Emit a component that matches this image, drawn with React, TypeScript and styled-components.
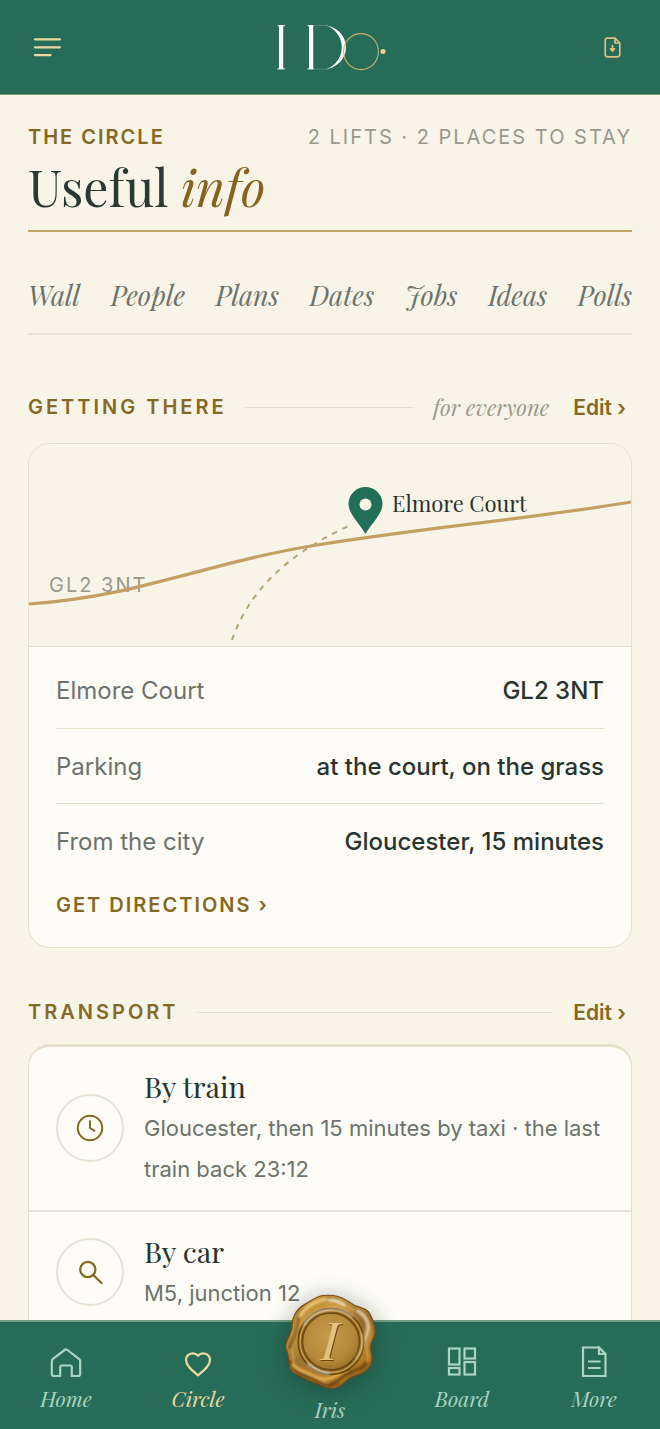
import React, { useState } from "react";
import styled, { createGlobalStyle } from "styled-components";

const sans = `Inter, "Liberation Sans", sans-serif`;
const serif = `"Playfair Display", "Liberation Serif", serif`;

const GlobalStyle = createGlobalStyle`
  * {
    box-sizing: border-box;
  }
  body {
    margin: 0;
    background: #f8f4e7;
    color: #2a342f;
    font-family: ${sans};
  }
  button {
    padding: 0;
    border: 0;
    background: none;
    color: inherit;
    font: inherit;
    cursor: pointer;
  }
  a {
    color: inherit;
    text-decoration: none;
  }
  h1, h2, h3, p, ul, dl, dd {
    margin: 0;
    padding: 0;
  }
  svg {
    display: block;
  }
`;

const Shell = styled.div`
  display: flex;
  flex-direction: column;
  height: 100vh;
`;

const TopBar = styled.header`
  display: flex;
  align-items: center;
  justify-content: space-between;
  height: 95px;
  padding: 0 32px;
  flex: none;
  background: #276c58;
  border-bottom: 1px solid #6f9a74;
  color: #ecd9a2;
`;

const IconButton = styled.button`
  display: flex;
  align-items: center;
  justify-content: center;
  width: 32px;
  height: 32px;
`;

const Main = styled.main`
  flex: 1;
  min-height: 0;
  overflow-y: auto;
  scrollbar-width: none;
  padding: 28px 28px 60px;
`;

const TitleBlock = styled.div`
  border-bottom: 2px solid #c6a468;
  padding-bottom: 7px;
`;

const TitleMeta = styled.div`
  display: flex;
  justify-content: space-between;
  font-size: 20px;
  line-height: 28px;
  letter-spacing: 2px;
  text-transform: uppercase;
  color: #97998d;
`;

const Eyebrow = styled.span`
  color: #846a24;
  font-weight: 600;
`;

const PageTitle = styled.h1`
  font-family: ${serif};
  font-size: 50px;
  font-weight: 400;
  line-height: 72px;
  color: #2a3a32;

  em {
    color: #86641c;
  }
`;

const Tabs = styled.nav`
  display: flex;
  justify-content: space-between;
  padding: 45px 0 20px;
  border-bottom: 2px solid #e8e3d5;
  font-family: ${serif};
  font-size: 27px;
  line-height: 36px;
  font-style: italic;
  color: #6b736c;
`;

const Section = styled.section<{ $tight?: boolean }>`
  margin-top: ${(p) => (p.$tight ? "48px" : "56px")};
`;

const SectionHead = styled.div<{ $tight?: boolean }>`
  display: flex;
  align-items: center;
  height: 32px;
  margin-bottom: ${(p) => (p.$tight ? "16px" : "20px")};
  padding-right: 6px;
`;

const SectionTitle = styled.h2`
  font-size: 20px;
  font-weight: 600;
  letter-spacing: 3px;
  text-transform: uppercase;
  color: #846a24;
`;

const Rule = styled.span`
  flex: 1;
  height: 1px;
  margin: 0 20px 0 18px;
  background: #e6dfc9;
`;

const Audience = styled.span`
  margin-right: 24px;
  font-family: ${serif};
  font-size: 22px;
  font-style: italic;
  color: #97998d;
`;

const EditButton = styled.button`
  font-size: 21px;
  font-weight: 600;
  color: #846a24;
`;

const Card = styled.div`
  overflow: hidden;
  border: 1px solid #e6dfc9;
  border-radius: 22px;
  background: #fdfcf7;
`;

const RouteList = styled(Card)`
  border-top-width: 3px;

  && {
    padding-bottom: 24px;
  }
`;

const MapBox = styled.div`
  background: #f8f4e7;
  border-bottom: 1px solid #e6dfc9;

  svg {
    width: 100%;
    height: auto;
  }
`;

const Facts = styled.dl`
  padding: 6px 27px 0;
`;

const Fact = styled.div`
  display: flex;
  align-items: center;
  justify-content: space-between;
  height: 75px;
  font-size: 24px;

  & + & {
    border-top: 1px solid #e6dfc9;
  }

  dt {
    color: #6b736c;
  }

  dd {
    font-weight: 500;
  }
`;

const Directions = styled.a`
  display: block;
  padding: 11px 27px 26px;
  font-size: 20px;
  line-height: 32px;
  font-weight: 600;
  letter-spacing: 2px;
  text-transform: uppercase;
  color: #846a24;
`;

const Route = styled.li`
  display: flex;
  align-items: center;
  gap: 20px;
  padding: 18px 27px 20px;
  list-style: none;

  & + & {
    border-top: 2px solid #e9e4d6;
  }
`;

const RouteIcon = styled.span`
  display: flex;
  align-items: center;
  justify-content: center;
  flex: none;
  width: 68px;
  height: 68px;
  border: 2px solid #e8e3d3;
  border-radius: 50%;
  color: #7f6a1f;
`;

const RouteName = styled.h3`
  font-family: ${serif};
  font-size: 29px;
  line-height: 43px;
  font-weight: 400;
`;

const RouteText = styled.p`
  font-size: 22px;
  line-height: 41px;
  color: #6b736c;
`;

const BottomNav = styled.nav`
  display: grid;
  grid-template-columns: repeat(5, 1fr);
  flex: none;
  height: 109px;
  background: #276c58;
  border-top: 2px solid #6f9f86;
`;

const NavItem = styled.a<{ $active?: boolean }>`
  display: flex;
  flex-direction: column;
  align-items: center;
  gap: 6px;
  padding-top: 24px;
  font-family: ${serif};
  font-size: 21px;
  line-height: 28px;
  font-style: italic;
  color: ${(p) => (p.$active ? "#ecd9a2" : "#a9d5c1")};
`;

const SealItem = styled.a`
  position: relative;
  display: flex;
  flex-direction: column;
  align-items: center;
  padding-top: 73px;
  font-family: ${serif};
  font-size: 21px;
  line-height: 28px;
  font-style: italic;
  color: #a9d5c1;
`;

const SealBadge = styled.span`
  position: absolute;
  top: -28px;
  left: 50%;
  transform: translateX(-50%);
  filter: drop-shadow(0 4px 12px rgba(20, 35, 28, 0.4));
`;

const Logo = () => (
  <svg width="112" height="48" viewBox="274 23 112 48" role="img" aria-label="I Do">
    <defs>
      <mask id="bowl">
        <rect x="326" y="20" width="30" height="55" fill="#fff" />
        <ellipse cx="318.5" cy="47.3" rx="23.3" ry="23.2" fill="#000" />
      </mask>
    </defs>
    <g fill="#fff">
      <rect x="279" y="25.5" width="4.2" height="43.5" />
      <rect x="277.5" y="25.2" width="7.5" height="1" />
      <rect x="277.5" y="68.4" width="7.5" height="1" />
      <rect x="309" y="25.5" width="4.2" height="43.5" />
      <rect x="307.5" y="25.2" width="6" height="1" />
      <rect x="307.5" y="68.4" width="6" height="1" />
      <rect x="313" y="25.3" width="15" height="0.6" opacity="0.35" />
      <rect x="313" y="68.8" width="15" height="0.6" opacity="0.35" />
      <ellipse cx="323" cy="47.3" rx="23" ry="22" mask="url(#bowl)" />
    </g>
    <ellipse cx="361" cy="51.6" rx="17.4" ry="18" fill="none" stroke="#c9b272" strokeWidth="1.1" />
    <circle cx="383" cy="51.6" r="2.5" fill="#ecd29a" />
  </svg>
);

const MenuIcon = () => (
  <svg width="32" height="32" viewBox="0 0 32 32" fill="none" stroke="currentColor" strokeWidth="2.2" strokeLinecap="round">
    <path d="M3 8.3h25M3 16.3h25M3 24.2h15.500" />
  </svg>
);

const SaveIcon = () => (
  <svg width="32" height="32" viewBox="0 0 32 32" fill="none" stroke="#d8c283" strokeWidth="1.700" strokeLinejoin="round" strokeLinecap="round">
    <path d="M19 7.200h-7.500A2.300 2.300 0 0 0 9.200 9.500v14a2.300 2.300 0 0 0 2.300 2.300h10a2.300 2.300 0 0 0 2.300-2.300V12L19 7.200V12h4.800" />
    <path d="M16.500 14.500v3" />
    <path d="M14.500 17.800h4l-2 2.500z" fill="#d8c283" />
  </svg>
);

const VenueMap = () => (
  <svg viewBox="0 0 602 202" fill="none">
    <text x="20" y="148" fontFamily={sans} fontSize="20" letterSpacing="2" fill="#97998d">
      GL2 3NT
    </text>
    <path d="M0 160C112 152 176 119 288 101S500 75 602 58" stroke="#c4a064" strokeWidth="3.200" />
    <path d="M203 196C217 155 250 113 322 81" stroke="#b9a47a" strokeWidth="2" strokeDasharray="5.500 6" />
    <path d="M336.500 90C331 80 319.500 70 319.500 60a17 17 0 0 1 34 0c0 10-11.500 20-17 30z" fill="#216f56" />
    <circle cx="336.500" cy="60.500" r="6" fill="#f8f4e7" />
    <text x="363" y="68" fontFamily={serif} fontSize="22" fill="#2a342f">
      Elmore Court
    </text>
  </svg>
);

const ClockIcon = () => (
  <svg width="32" height="32" viewBox="0 0 32 32" fill="none" stroke="currentColor" strokeWidth="2" strokeLinecap="round" strokeLinejoin="round">
    <circle cx="16" cy="16" r="12.200" />
    <path d="M16 9.200V16l4.500 2.800" />
  </svg>
);

const SearchIcon = () => (
  <svg width="32" height="32" viewBox="0 0 32 32" fill="none" stroke="currentColor" strokeWidth="2.200" strokeLinecap="round">
    <circle cx="13.800" cy="13.500" r="7.600" />
    <path d="M19.500 19.200l8 7.800" />
  </svg>
);

const HomeIcon = () => (
  <svg width="32" height="32" viewBox="0 0 32 32" fill="none" stroke="currentColor" strokeWidth="2.200" strokeLinejoin="round">
    <path d="M1.800 15.200a3 3 0 0 1 1.200-2.400L14.600 4a2.300 2.300 0 0 1 2.800 0L29 12.800a3 3 0 0 1 1.200 2.400V28a2 2 0 0 1-2 2h-6.400V21a1.500 1.500 0 0 0-1.500-1.500h-8.600a1.500 1.500 0 0 0-1.500 1.500v9H3.800a2 2 0 0 1-2-2z" />
  </svg>
);

const HeartIcon = () => (
  <svg width="32" height="32" viewBox="0 0 32 32" fill="none" stroke="currentColor" strokeWidth="2.200" strokeLinejoin="round">
    <path d="M16 29.300C11.500 25.500 4 20.500 4 13.800a6.800 6.800 0 0 1 12-4 6.800 6.800 0 0 1 12 4C28 20.500 20.500 25.500 16 29.300z" />
  </svg>
);

const BoardIcon = () => (
  <svg width="32" height="32" viewBox="0 0 32 32" fill="none" stroke="currentColor" strokeWidth="2.200">
    <rect x="3" y="2.500" width="10.500" height="16" />
    <rect x="3" y="22" width="10.500" height="6.500" />
    <rect x="18.500" y="2.500" width="10.500" height="10" />
    <rect x="18.500" y="16" width="10.500" height="12.500" />
  </svg>
);

const PageIcon = () => (
  <svg width="32" height="32" viewBox="0 0 32 32" fill="none" stroke="currentColor" strokeWidth="2.200">
    <path d="M21 1.500H5V30h22.500V8L21 1.500V8h6.500" />
    <path d="M10 15.500h12.500M10 22h12.500" />
  </svg>
);

const waxEdge =
  "M24 9C29 6 34 2 40 1.500S50 1 55 2.500C62 4 66 9 72 11.500S84 14 87 20s5 12 5 18-4 9-4.500 15S90 59 89 66s-4 9-9 12.500S73 80 67 84s-9 9-15 10-10-.5-15-3-11-4-17-7.500S9 80 7 74s-1-8-2-13-3-6-2-11S7 42 8.500 36 8 27 12 20 19 12 24 9z";

const Seal = () => (
  <svg width="94" height="98" viewBox="0 0 94 98">
    <defs>
      <linearGradient id="wax" x1="0.200" y1="0" x2="0.800" y2="1">
        <stop offset="0" stopColor="#b0802a" />
        <stop offset="0.250" stopColor="#cf9f45" />
        <stop offset="0.500" stopColor="#9c7230" />
        <stop offset="0.750" stopColor="#b88029" />
        <stop offset="1" stopColor="#945c14" />
      </linearGradient>
      <radialGradient id="face" cx="0.450" cy="0.400" r="0.650">
        <stop offset="0" stopColor="#c49b4a" />
        <stop offset="0.700" stopColor="#b48839" />
        <stop offset="1" stopColor="#946a25" />
      </radialGradient>
      <filter id="soft">
        <feGaussianBlur stdDeviation="0.800" />
      </filter>
    </defs>
    <path d={waxEdge} fill="url(#wax)" stroke="#7c4d12" strokeWidth="1.200" />
    <g fill="none" strokeLinecap="round" filter="url(#soft)">
      <path d={waxEdge} transform="translate(3 3) scale(0.940)" stroke="#6d4310" strokeWidth="1.400" opacity="0.550" />
      <path d={waxEdge} transform="translate(5 5) scale(0.900)" stroke="#e6c06c" strokeWidth="2" opacity="0.550" />
      <path d="M7 68c3 8 8 11 14 13s11 5 17 8 11 3 17-2 9-8 16-10 10-4 12-8" stroke="#5f350a" strokeWidth="3" opacity="0.800" />
      <path d="M10 71c4 4 8 5 14 8s12 6 19 6 12-5 20-9" stroke="#ecb552" strokeWidth="2.500" />
      <path d="M7 54c1-7 6-12 7-19s1-12 6-17" stroke="#5f3d10" strokeWidth="2.500" opacity="0.700" />
      <path d="M17 22C23 12 32 7 42 5" stroke="#eec872" strokeWidth="3" />
      <path d="M46 6c6 0 11 2 15 5" stroke="#f1efe4" strokeWidth="2.500" opacity="0.850" />
      <path d="M75 17c7 5 11 10 10 18s-4 10-5 17" stroke="#f0e6cb" strokeWidth="2.500" opacity="0.800" />
      <path d="M71 17c6 5 9 10 10 16" stroke="#6d5326" strokeWidth="1.600" opacity="0.700" />
    </g>
    <circle cx="48" cy="47.500" r="33" fill="#946a22" stroke="#60430f" strokeWidth="1.300" />
    <circle cx="48" cy="47.500" r="31" fill="none" stroke="#c99c4c" strokeWidth="1.300" />
    <circle cx="48" cy="47.500" r="28.500" fill="url(#face)" stroke="#6a4814" strokeWidth="1.600" />
    <g fill="none" strokeLinecap="round" filter="url(#soft)">
      <path d="M21 31C26 21 36 16 48 15.500s16 3 21 7" stroke="#cfc6b0" strokeWidth="1.800" />
      <path d="M25 70c7 6 13 9 21 9.500" stroke="#cdd3cf" strokeWidth="1.800" />
      <path d="M79 40c2 9 0 17-6 25" stroke="#d9c08a" strokeWidth="1.600" />
    </g>
    <g fontFamily={serif} fontSize="52" fontStyle="italic" textAnchor="middle">
      <text x="48" y="67" fill="#6f4a14">I</text>
      <text x="47" y="66" fill="#e6c280">I</text>
    </g>
  </svg>
);

const tabs = ["Wall", "People", "Plans", "Dates", "Jobs", "Ideas", "Polls"];

const facts = [
  { label: "Elmore Court", value: "GL2 3NT" },
  { label: "Parking", value: "at the court, on the grass" },
  { label: "From the city", value: "Gloucester, 15 minutes" },
];

const routes = [
  { name: "By train", text: "Gloucester, then 15 minutes by taxi · the last train back 23:12", icon: <ClockIcon /> },
  { name: "By car", text: "M5, junction 12", icon: <SearchIcon /> },
];

const App = () => {
  const [active, setActive] = useState("Circle");

  const navLink = (name: string, icon: React.ReactNode) => (
    <NavItem href="#" $active={active === name} onClick={() => setActive(name)}>
      {icon}
      {name}
    </NavItem>
  );

  return (
    <Shell>
      <GlobalStyle />
      <TopBar>
        <IconButton aria-label="Menu">
          <MenuIcon />
        </IconButton>
        <Logo />
        <IconButton aria-label="Save">
          <SaveIcon />
        </IconButton>
      </TopBar>

      <Main>
        <TitleBlock>
          <TitleMeta>
            <Eyebrow>The Circle</Eyebrow>
            <span>2 lifts · 2 places to stay</span>
          </TitleMeta>
          <PageTitle>
            Useful <em>info</em>
          </PageTitle>
        </TitleBlock>

        <Tabs>
          {tabs.map((tab) => (
            <a href="#" key={tab}>
              {tab}
            </a>
          ))}
        </Tabs>

        <Section>
          <SectionHead>
            <SectionTitle>Getting there</SectionTitle>
            <Rule />
            <Audience>for everyone</Audience>
            <EditButton>Edit ›</EditButton>
          </SectionHead>
          <Card>
            <MapBox>
              <VenueMap />
            </MapBox>
            <Facts>
              {facts.map((fact) => (
                <Fact key={fact.label}>
                  <dt>{fact.label}</dt>
                  <dd>{fact.value}</dd>
                </Fact>
              ))}
            </Facts>
            <Directions href="#">Get directions ›</Directions>
          </Card>
        </Section>

        <Section $tight>
          <SectionHead $tight>
            <SectionTitle>Transport</SectionTitle>
            <Rule />
            <EditButton>Edit ›</EditButton>
          </SectionHead>
          <RouteList as="ul">
            {routes.map((route) => (
              <Route key={route.name}>
                <RouteIcon>{route.icon}</RouteIcon>
                <div>
                  <RouteName>{route.name}</RouteName>
                  <RouteText>{route.text}</RouteText>
                </div>
              </Route>
            ))}
          </RouteList>
        </Section>
      </Main>

      <BottomNav>
        {navLink("Home", <HomeIcon />)}
        {navLink("Circle", <HeartIcon />)}
        <SealItem href="#">
          <SealBadge>
            <Seal />
          </SealBadge>
          Iris
        </SealItem>
        {navLink("Board", <BoardIcon />)}
        {navLink("More", <PageIcon />)}
      </BottomNav>
    </Shell>
  );
};

export default App;
